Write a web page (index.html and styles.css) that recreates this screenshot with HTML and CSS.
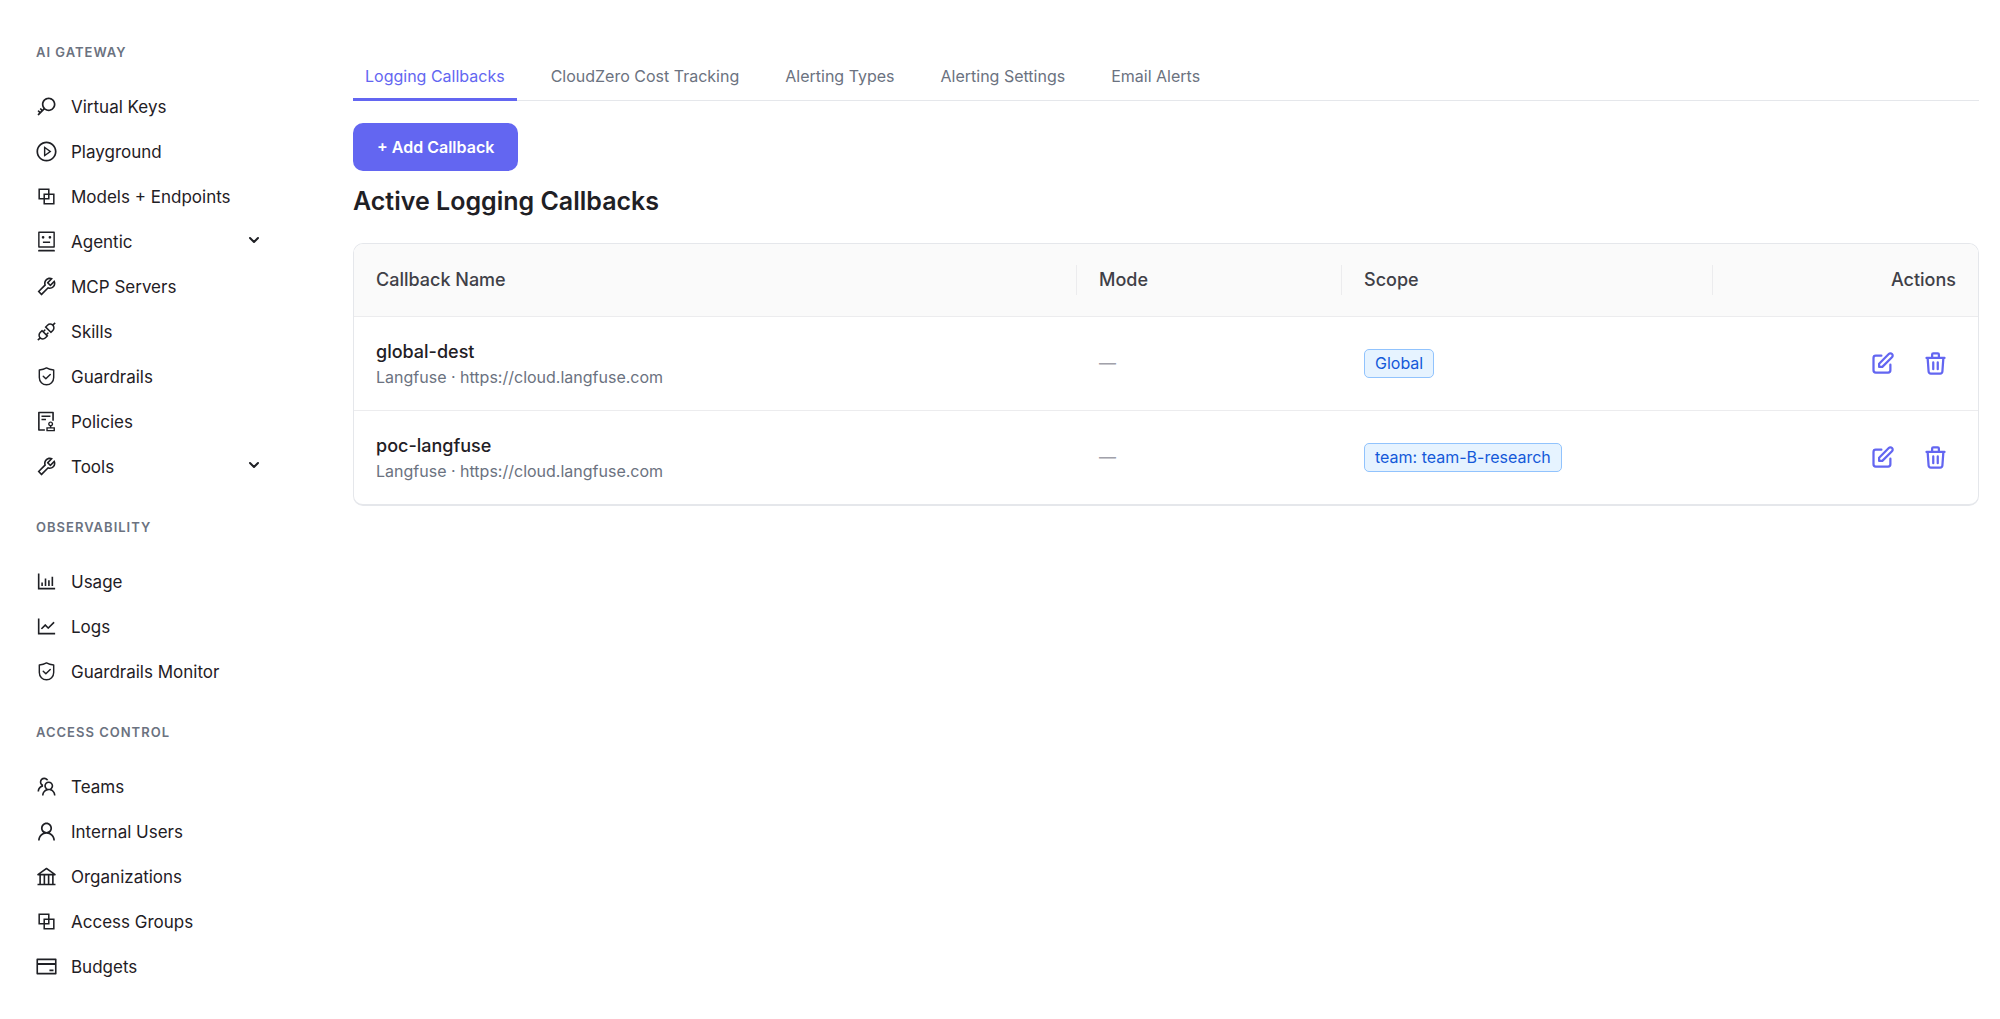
FILE: index.html
```html
<!DOCTYPE html>
<html lang="en">
<head>
    <meta charset="UTF-8">
    <title>Logging Callbacks</title>
    <link rel="stylesheet" href="styles.css">
</head>
<body>
    <!-- icon sprite -->
    <svg class="sprite" aria-hidden="true">
        <symbol id="i-key" viewBox="0 0 1024 1024"><path d="M608 112c-167.9 0-304 136.1-304 304 0 70.3 23.9 135 63.9 186.5l-41.1 41.1-62.3-62.3a8.15 8.15 0 00-11.4 0l-39.8 39.8a8.15 8.15 0 000 11.4l62.3 62.3-44.9 44.9-62.3-62.3a8.15 8.15 0 00-11.4 0l-39.8 39.8a8.15 8.15 0 000 11.4l62.3 62.3-65.3 65.3a8.03 8.03 0 000 11.3l42.3 42.3c3.1 3.1 8.2 3.1 11.3 0l253.6-253.6A304.06 304.06 0 00608 720c167.9 0 304-136.1 304-304S775.9 112 608 112zm161.2 465.2C726.2 620.3 668.9 644 608 644c-60.9 0-118.2-23.7-161.2-66.8-43.1-43-66.8-100.3-66.8-161.2 0-60.9 23.7-118.2 66.8-161.2 43-43.1 100.3-66.8 161.2-66.8 60.9 0 118.2 23.7 161.2 66.8 43.1 43 66.8 100.3 66.8 161.2 0 60.9-23.7 118.2-66.8 161.2z"/></symbol>
        <symbol id="i-play" viewBox="0 0 1024 1024"><path d="M512 64C264.6 64 64 264.6 64 512s200.6 448 448 448 448-200.6 448-448S759.4 64 512 64zm0 820c-205.4 0-372-166.6-372-372s166.6-372 372-372 372 166.6 372 372-166.6 372-372 372z"/><path d="M719.4 499.1l-296.1-215A15.9 15.9 0 00398 297v430c0 13.1 14.8 20.5 25.3 12.9l296.1-215a15.9 15.9 0 000-25.8zm-257.6 134V390.9L628.5 512 461.8 633.1z"/></symbol>
        <symbol id="i-block" viewBox="0 0 1024 1024"><path d="M856 376H648V168c0-8.800-7.200-16-16-16H168c-8.800 0-16 7.200-16 16v464c0 8.800 7.200 16 16 16h208v208c0 8.800 7.200 16 16 16h464c8.800 0 16-7.200 16-16V392c0-8.800-7.200-16-16-16zm-480 16v188H220V220h360v156H392c-8.800 0-16 7.200-16 16zm204 52v136H444V444h136zm224 360H444V648h188c8.800 0 16-7.200 16-16V444h156v360z"/></symbol>
        <symbol id="i-robot" viewBox="0 0 1024 1024"><path d="M300 328a60 60 0 10120 0 60 60 0 10-120 0zM852 64H172c-17.7 0-32 14.3-32 32v660c0 17.7 14.3 32 32 32h680c17.7 0 32-14.3 32-32V96c0-17.7-14.3-32-32-32zm-32 660H204V128h616v596zM604 328a60 60 0 10120 0 60 60 0 10-120 0zm250.2 556H169.8c-16.5 0-29.8 14.3-29.8 32v36c0 4.4 3.3 8 7.4 8h729.1c4.1 0 7.4-3.6 7.4-8v-36c.1-17.7-13.2-32-29.7-32zM664 508H360c-4.4 0-8 3.6-8 8v60c0 4.4 3.6 8 8 8h304c4.4 0 8-3.6 8-8v-60c0-4.4-3.6-8-8-8z"/></symbol>
        <symbol id="i-tool" viewBox="0 0 1024 1024"><path d="M876.6 239.5c-.5-.9-1.2-1.8-2-2.5-5-5-13.1-5-18.1 0L684.2 409.3l-67.9-67.9L788.7 169c.8-.8 1.4-1.6 2-2.5 3.6-6.1 1.6-13.9-4.5-17.5-98.2-58-226.8-44.7-311.3 39.7-67 67-89.2 162-66.5 247.4l-293 293c-3 3-2.8 7.9.3 11l169.7 169.7c3.1 3.1 8.1 3.3 11 .3l292.9-292.9c85.5 22.8 180.5.7 247.6-66.4 84.4-84.5 97.7-213.1 39.7-311.3zM786 499.8c-58.1 58.1-145.3 69.3-214.6 33.6l-8.8 8.8-.1-.1-274 274.1-79.2-79.2 230.1-230.1s0 .1.1.1l52.8-52.8c-35.7-69.3-24.5-156.5 33.6-214.6a184.2 184.2 0 01144-53.5L537 318.9a32.05 32.05 0 000 45.3l124.5 124.5a32.05 32.05 0 0045.3 0l132.8-132.8c3.7 51.8-14.4 104.8-53.6 143.9z"/></symbol>
        <symbol id="i-api" viewBox="0 0 1024 1024"><path d="M917.7 148.8l-42.4-42.4c-1.6-1.6-3.6-2.3-5.7-2.3s-4.1.8-5.7 2.3l-76.1 76.1a199.27 199.27 0 00-112.1-34.3c-51.2 0-102.4 19.5-141.5 58.6L432.3 308.7a8.03 8.03 0 000 11.3L704 591.7c1.6 1.6 3.6 2.3 5.7 2.3 2 0 4.1-.8 5.7-2.3l101.9-101.9c68.9-69 77-175.7 24.3-253.5l76.1-76.1c3.1-3.2 3.1-8.3 0-11.4zM769.1 441.7l-59.4 59.4-186.8-186.8 59.4-59.4c24.9-24.9 58.1-38.7 93.4-38.7 35.3 0 68.4 13.7 93.4 38.7 24.9 24.9 38.7 58.1 38.7 93.4 0 35.3-13.8 68.4-38.7 93.4zm-190.2 105a8.03 8.03 0 00-11.3 0L501 613.3 410.7 523l66.7-66.7c3.1-3.1 3.1-8.2 0-11.3L441 408.6a8.03 8.03 0 00-11.3 0L363 475.3l-43-43a7.85 7.85 0 00-5.7-2.3c-2 0-4.1.8-5.7 2.3L206.8 534.2c-68.9 69-77 175.7-24.3 253.5l-76.1 76.1a8.03 8.03 0 000 11.3l42.4 42.4c1.6 1.6 3.6 2.3 5.7 2.3s4.1-.8 5.7-2.3l76.1-76.1c33.7 22.9 72.9 34.3 112.1 34.3 51.2 0 102.4-19.5 141.5-58.6l101.9-101.9c3.1-3.1 3.1-8.2 0-11.3l-43-43 66.7-66.7c3.1-3.1 3.1-8.2 0-11.3l-36.6-36.2zM441.900 769.100A131.300 131.300 0 01348.400 807.800c-35.300 0-68.400-13.700-93.400-38.700-24.900-24.900-38.700-58.100-38.700-93.400 0-35.300 13.800-68.400 38.700-93.400l59.400-59.400 186.800 186.800-59.300 59.400z"/></symbol>
        <symbol id="i-shield" viewBox="0 0 24 24"><path class="line" d="M12 3.100C14.500 4.500 17 5 19.500 5.200v7.900c0 4.300-3.300 7.500-7.500 7.500s-7.500-3.200-7.500-7.500V5.200C7 5 9.500 4.500 12 3.100zM8.600 11.700l2.700 2.700 4.600-4.600"/></symbol>
        <symbol id="i-audit" viewBox="0 0 1024 1024"><path d="M296 250c-4.4 0-8 3.6-8 8v48c0 4.4 3.6 8 8 8h384c4.4 0 8-3.6 8-8v-48c0-4.4-3.6-8-8-8H296zm184 144H296c-4.4 0-8 3.6-8 8v48c0 4.4 3.6 8 8 8h184c4.4 0 8-3.6 8-8v-48c0-4.4-3.6-8-8-8zm-48 458H208V148h560v320c0 4.4 3.6 8 8 8h56c4.4 0 8-3.6 8-8V108c0-17.7-14.3-32-32-32H168c-17.7 0-32 14.3-32 32v784c0 17.7 14.3 32 32 32h264c4.4 0 8-3.6 8-8v-56c0-4.4-3.6-8-8-8zm440-88H728v-36.6c46.3-13.8 80-56.6 80-107.4 0-61.9-50.1-112-112-112s-112 50.1-112 112c0 50.7 33.7 93.6 80 107.4V764H520c-8.8 0-16 7.2-16 16v152c0 8.8 7.2 16 16 16h352c8.8 0 16-7.2 16-16V780c0-8.8-7.2-16-16-16zM646 620c0-27.6 22.4-50 50-50s50 22.4 50 50-22.4 50-50 50-50-22.4-50-50zm180 266H566v-60h260v60z"/></symbol>
        <symbol id="i-bars" viewBox="0 0 1024 1024"><path d="M888 792H200V168c0-4.4-3.6-8-8-8h-56c-4.4 0-8 3.6-8 8v688c0 4.4 3.6 8 8 8h752c4.4 0 8-3.6 8-8v-56c0-4.4-3.6-8-8-8zm-600-80h56c4.4 0 8-3.6 8-8V560c0-4.4-3.6-8-8-8h-56c-4.4 0-8 3.6-8 8v144c0 4.4 3.6 8 8 8zm152 0h56c4.4 0 8-3.6 8-8V384c0-4.4-3.6-8-8-8h-56c-4.4 0-8 3.6-8 8v320c0 4.4 3.6 8 8 8zm152 0h56c4.4 0 8-3.6 8-8V462c0-4.4-3.6-8-8-8h-56c-4.4 0-8 3.6-8 8v242c0 4.4 3.6 8 8 8zm152 0h56c4.4 0 8-3.6 8-8V304c0-4.4-3.6-8-8-8h-56c-4.4 0-8 3.6-8 8v400c0 4.4 3.6 8 8 8z"/></symbol>
        <symbol id="i-line" viewBox="0 0 1024 1024"><path d="M888 792H200V168c0-4.4-3.6-8-8-8h-56c-4.4 0-8 3.6-8 8v688c0 4.4 3.6 8 8 8h752c4.4 0 8-3.6 8-8v-56c0-4.4-3.6-8-8-8zM305.8 637.7c3.1 3.1 8.1 3.1 11.3 0l138.3-137.6L583 628.5c3.1 3.1 8.2 3.1 11.3 0l275.4-275.3c3.1-3.1 3.1-8.2 0-11.3l-39.6-39.6a8.03 8.03 0 00-11.3 0l-230 229.9L461.4 404a8.03 8.03 0 00-11.3 0L266.3 586.7a8.03 8.03 0 000 11.3l39.5 39.7z"/></symbol>
        <symbol id="i-team" viewBox="0 0 1024 1024"><path d="M824.2 699.9a301.55 301.55 0 00-86.4-60.4C783.1 602.8 812 546.8 812 484c0-110.8-92.4-201.7-203.2-200-109.1 1.7-197 90.6-197 200 0 62.8 29 118.8 74.2 155.5a300.95 300.95 0 00-86.4 60.4C345 754.6 314 826.8 312 903.8a8 8 0 008 8.2h56c4.3 0 7.9-3.4 8-7.7 1.9-58 25.4-112.3 66.7-153.5A226.62 226.62 0 01612 684c60.9 0 118.2 23.7 161.3 66.8C814.6 792 838 846.3 840 904.3c.1 4.3 3.7 7.7 8 7.7h56a8 8 0 008-8.2c-2-77-33-149.2-87.8-203.9zM612 612c-34.2 0-66.4-13.3-90.5-37.5a126.86 126.86 0 01-37.5-91.8c.3-32.8 13.4-64.5 36.3-88 24-24.6 56.1-38.3 90.4-38.7 33.9-.3 66.8 12.9 91 36.6 24.8 24.3 38.4 56.8 38.4 91.4 0 34.2-13.3 66.3-37.5 90.5A127.3 127.3 0 01612 612zM361.5 510.4c-.9-8.7-1.4-17.5-1.4-26.4 0-15.9 1.5-31.4 4.3-46.5.7-3.6-1.2-7.3-4.5-8.8-13.6-6.1-26.1-14.5-36.9-25.1a127.54 127.54 0 01-38.7-95.4c.9-32.1 13.8-62.6 36.3-85.6 24.7-25.3 57.9-39.1 93.2-38.7 31.9.3 62.7 12.6 86 34.4 7.9 7.4 14.7 15.6 20.4 24.4 2 3.1 5.9 4.4 9.3 3.2 17.6-6.1 36.2-10.4 55.3-12.4 5.6-.6 8.8-6.6 6.3-11.6-32.5-64.3-98.9-108.7-175.7-109.9-110.9-1.7-203.3 89.2-203.3 199.9 0 62.8 28.9 118.8 74.2 155.5-31.8 14.7-61.1 35-86.5 60.4-54.8 54.7-85.8 126.9-87.8 204a8 8 0 008 8.2h56.1c4.3 0 7.9-3.4 8-7.7 1.9-58 25.4-112.3 66.7-153.5 29.4-29.4 65.4-49.8 104.7-59.7 3.9-1 6.5-4.7 6-8.7z"/></symbol>
        <symbol id="i-user" viewBox="0 0 1024 1024"><path d="M858.5 763.6a374 374 0 00-80.6-119.5 375.63 375.63 0 00-119.5-80.6c-.4-.2-.8-.3-1.2-.5C719.5 518 760 444.7 760 362c0-137-111-248-248-248S264 225 264 362c0 82.7 40.5 156 102.8 201.1-.4.2-.8.3-1.2.5-44.8 18.9-85 46-119.5 80.6a375.63 375.63 0 00-80.6 119.5A371.7 371.7 0 00136 901.8a8 8 0 008 8.2h60c4.4 0 7.9-3.5 8-7.8 2-77.2 33-149.5 87.8-204.3 56.7-56.7 132-87.9 212.2-87.9s155.5 31.2 212.2 87.9C779 752.7 810 825 812 902.2c.1 4.4 3.6 7.8 8 7.8h60a8 8 0 008-8.2c-1-47.8-10.9-94.3-29.5-138.2zM512 534c-45.9 0-89.1-17.9-121.6-50.4S340 407.9 340 362c0-45.9 17.9-89.1 50.4-121.6S466.1 190 512 190s89.1 17.9 121.6 50.4S684 316.1 684 362c0 45.9-17.9 89.1-50.4 121.6S557.9 534 512 534z"/></symbol>
        <symbol id="i-bank" viewBox="0 0 1024 1024"><path d="M894 462c30.9 0 43.8-39.7 18.7-58L530.8 126.2a31.81 31.81 0 00-37.6 0L111.3 404c-25.1 18.2-12.2 58 18.8 58H192v374h-72c-4.4 0-8 3.6-8 8v52c0 4.4 3.6 8 8 8h784c4.4 0 8-3.6 8-8v-52c0-4.4-3.6-8-8-8h-72V462h62zM512 196.7l271.1 197.2H240.9L512 196.7zM264 462h117v374H264V462zm189 0h117v374H453V462zm307 374H642V462h118v374z"/></symbol>
        <symbol id="i-card" viewBox="0 0 1024 1024"><path d="M928 160H96c-17.7 0-32 14.3-32 32v640c0 17.7 14.3 32 32 32h832c17.7 0 32-14.3 32-32V192c0-17.7-14.3-32-32-32zm-792 72h752v120H136V232zm752 560H136V440h752v352zM651 728h165c4.400 0 8-3.600 8-8v-72c0-4.400-3.600-8-8-8H651c-4.400 0-8 3.600-8 8v72c0 4.400 3.600 8 8 8z"/></symbol>
        <symbol id="i-chevron" viewBox="0 0 12 12"><path class="line bold" d="M2 4l4 4 4-4"/></symbol>
        <symbol id="i-edit" viewBox="0 0 24 24"><path class="line bold" d="M11 5H6a2 2 0 00-2 2v11a2 2 0 002 2h11a2 2 0 002-2v-5m-1.414-9.414a2 2 0 112.828 2.828L11.828 15H9v-2.828l8.586-8.586z"/></symbol>
        <symbol id="i-trash" viewBox="0 0 24 24"><path class="line bold" d="M19 7l-.867 12.142A2 2 0 0116.138 21H7.862a2 2 0 01-1.995-1.858L5 7m5 4v6m4-6v6m1-10V4a1 1 0 00-1-1h-4a1 1 0 00-1 1v3M4 7h16"/></symbol>
    </svg>

    <div class="layout">
        <nav class="sidebar">
            <h2 class="group-title">AI GATEWAY</h2>
            <ul class="menu">
                <li><a href="#"><svg class="icon"><use href="#i-key"/></svg>Virtual Keys</a></li>
                <li><a href="#"><svg class="icon"><use href="#i-play"/></svg>Playground</a></li>
                <li><a href="#"><svg class="icon"><use href="#i-block"/></svg>Models + Endpoints</a></li>
                <li><a href="#"><svg class="icon"><use href="#i-robot"/></svg>Agentic<svg class="chevron"><use href="#i-chevron"/></svg></a></li>
                <li><a href="#"><svg class="icon"><use href="#i-tool"/></svg>MCP Servers</a></li>
                <li><a href="#"><svg class="icon"><use href="#i-api"/></svg>Skills</a></li>
                <li><a href="#"><svg class="icon"><use href="#i-shield"/></svg>Guardrails</a></li>
                <li><a href="#"><svg class="icon"><use href="#i-audit"/></svg>Policies</a></li>
                <li><a href="#"><svg class="icon"><use href="#i-tool"/></svg>Tools<svg class="chevron"><use href="#i-chevron"/></svg></a></li>
            </ul>
            <h2 class="group-title">OBSERVABILITY</h2>
            <ul class="menu">
                <li><a href="#"><svg class="icon"><use href="#i-bars"/></svg>Usage</a></li>
                <li><a href="#"><svg class="icon"><use href="#i-line"/></svg>Logs</a></li>
                <li><a href="#"><svg class="icon"><use href="#i-shield"/></svg>Guardrails Monitor</a></li>
            </ul>
            <h2 class="group-title">ACCESS CONTROL</h2>
            <ul class="menu">
                <li><a href="#"><svg class="icon"><use href="#i-team"/></svg>Teams</a></li>
                <li><a href="#"><svg class="icon"><use href="#i-user"/></svg>Internal Users</a></li>
                <li><a href="#"><svg class="icon"><use href="#i-bank"/></svg>Organizations</a></li>
                <li><a href="#"><svg class="icon"><use href="#i-block"/></svg>Access Groups</a></li>
                <li><a href="#"><svg class="icon"><use href="#i-card"/></svg>Budgets</a></li>
            </ul>
        </nav>

        <main class="content">
            <div class="tabs" role="tablist">
                <button class="tab active" role="tab" aria-selected="true">Logging Callbacks</button>
                <button class="tab" role="tab">CloudZero Cost Tracking</button>
                <button class="tab" role="tab">Alerting Types</button>
                <button class="tab" role="tab">Alerting Settings</button>
                <button class="tab" role="tab">Email Alerts</button>
            </div>

            <button class="add-button">+ Add Callback</button>
            <h1>Active Logging Callbacks</h1>

            <div class="table-card">
                <table>
                    <thead>
                        <tr>
                            <th class="col-name"><span>Callback Name</span></th>
                            <th class="col-mode"><span>Mode</span></th>
                            <th class="col-scope"><span>Scope</span></th>
                            <th class="col-actions"><span>Actions</span></th>
                        </tr>
                    </thead>
                    <tbody>
                        <tr>
                            <td>
                                <div class="name">global-dest</div>
                                <div class="details">Langfuse · https://cloud.langfuse.com</div>
                            </td>
                            <td class="empty">—</td>
                            <td><span class="tag">Global</span></td>
                            <td>
                                <div class="actions">
                                    <button aria-label="Edit"><svg><use href="#i-edit"/></svg></button>
                                    <button aria-label="Delete"><svg><use href="#i-trash"/></svg></button>
                                </div>
                            </td>
                        </tr>
                        <tr>
                            <td>
                                <div class="name">poc-langfuse</div>
                                <div class="details">Langfuse · https://cloud.langfuse.com</div>
                            </td>
                            <td class="empty">—</td>
                            <td><span class="tag">team: team-B-research</span></td>
                            <td>
                                <div class="actions">
                                    <button aria-label="Edit"><svg><use href="#i-edit"/></svg></button>
                                    <button aria-label="Delete"><svg><use href="#i-trash"/></svg></button>
                                </div>
                            </td>
                        </tr>
                    </tbody>
                </table>
            </div>
        </main>
    </div>
</body>
</html>
```
FILE: styles.css
```css
* {
    box-sizing: border-box;
}

body {
    margin: 0;
    background-color: #fff;
    color: #1f2025;
    font-family: Inter, "Liberation Sans", sans-serif;
    font-size: 17px;
}

button {
    padding: 0;
    border: none;
    background: none;
    font-family: inherit;
    font-size: 16px;
    cursor: pointer;
}

.sprite {
    display: none;
}

.line {
    fill: none;
    stroke: currentColor;
    stroke-width: 1.5;
    stroke-linecap: round;
    stroke-linejoin: round;
}

.bold {
    stroke-width: 2;
}

.layout {
    display: flex;
    align-items: flex-start;
}

/* sidebar */
.sidebar {
    flex: 0 0 294px;
    padding: 14px 34px 30px 35px;
}

.group-title {
    margin: 0;
    padding: 27px 1px 21px;
    font-size: 13px;
    font-weight: 600;
    line-height: 22px;
    letter-spacing: 1px;
    color: #6b7280;
}

.menu {
    margin: 0;
    padding: 0;
    list-style: none;
}

.menu a {
    display: flex;
    align-items: center;
    height: 45px;
    color: inherit;
    text-decoration: none;
}

.icon {
    width: 23px;
    height: 23px;
    margin-right: 13px;
    fill: currentColor;
}

.chevron {
    width: 12px;
    height: 12px;
    margin-left: auto;
    margin-bottom: 4px;
}

/* main area */
.content {
    flex: 1;
    min-width: 0;
    padding: 52px 21px 0 59px;
}

.tabs {
    display: flex;
    gap: 22px;
    border-bottom: 1px solid #e5e7eb;
}

.tab {
    height: 49px;
    margin-bottom: -1px;
    padding: 2px 12px 0;
    border-bottom: 3px solid transparent;
    color: #6b7280;
}

.tab.active {
    border-bottom-color: #6366f1;
    color: #6366f1;
}

.add-button {
    display: block;
    height: 48px;
    margin-top: 22px;
    padding: 0 24px;
    border-radius: 10px;
    background-color: #6366f1;
    color: #fff;
    font-weight: 600;
}

h1 {
    margin: 12px 0 24px;
    font-size: 25px;
    font-weight: 600;
    line-height: 36px;
}

/* callbacks table */
.table-card {
    overflow: hidden;
    border: 1px solid #e5e7eb;
    border-bottom-width: 2px;
    border-radius: 10px;
}

table {
    width: 100%;
    border-collapse: collapse;
    table-layout: fixed;
}

th {
    height: 72px;
    padding: 0;
    border-bottom: 1px solid #ececee;
    background-color: #fafafa;
    color: #3f4047;
    font-size: 18px;
    font-weight: 500;
    text-align: left;
}

th span {
    display: block;
    padding: 0 22px;
    border-right: 1px solid #ececee;
    line-height: 30px;
}

.col-mode {
    width: 265px;
}

.col-scope {
    width: 371px;
}

.col-actions {
    width: 265px;
    text-align: right;
}

.col-actions span {
    border-right: none;
}

td {
    height: 94px;
    padding: 0 22px;
}

tbody tr + tr td {
    border-top: 1px solid #ececee;
}

.name {
    padding-top: 2px;
    font-size: 18px;
    font-weight: 500;
    line-height: 26px;
}

.details {
    color: #6b7280;
    font-size: 16px;
    line-height: 24px;
}

.empty {
    color: #a1a1aa;
}

.tag {
    display: inline-block;
    padding: 0 10px;
    border: 1px solid #91c3fd;
    border-radius: 5px;
    background-color: #e6f3ff;
    color: #1459d9;
    font-size: 16px;
    line-height: 27px;
}

.actions {
    display: flex;
    justify-content: flex-end;
    gap: 26px;
    padding-right: 7px;
}

.actions button {
    display: flex;
    color: #6366f1;
}

.actions svg {
    width: 27px;
    height: 27px;
}
```
